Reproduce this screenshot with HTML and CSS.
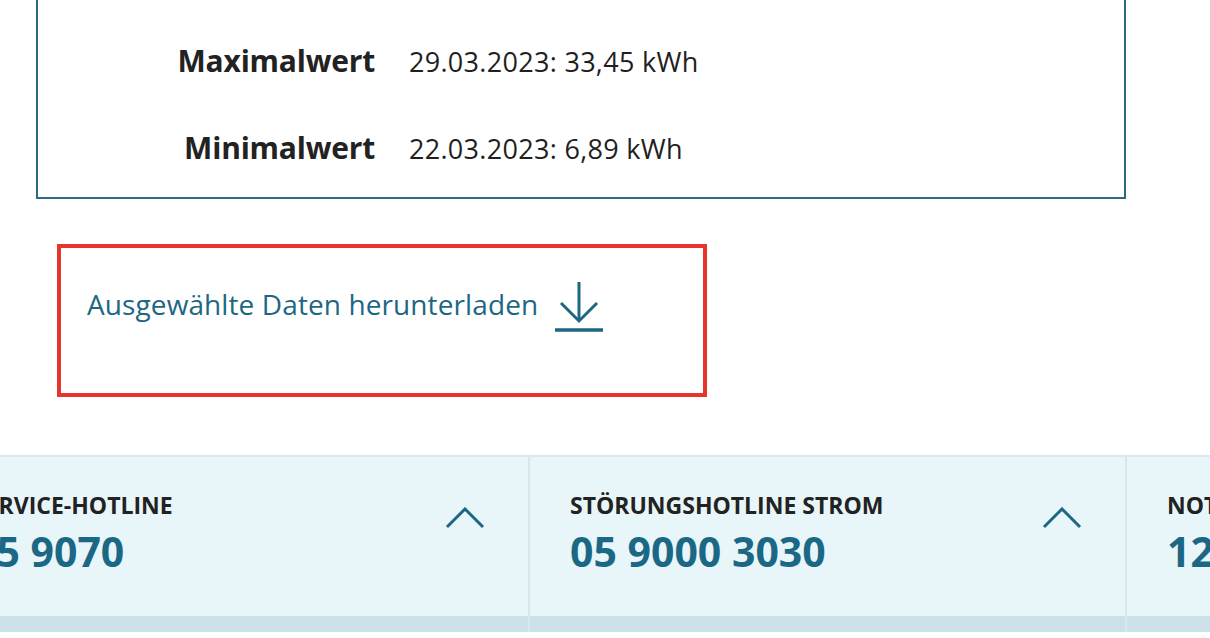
FILE: index.html
```html
<!DOCTYPE html>
<html lang="de">
<head>
<meta charset="utf-8">
<title>Verbrauchsdaten</title>
<link rel="stylesheet" href="styles.css">
</head>
<body>
<section class="card">
  <dl class="stats">
    <dt class="stat-label">Maximalwert</dt>
    <dd class="stat-value">29.03.2023: 33,45 kWh</dd>
    <dt class="stat-label">Minimalwert</dt>
    <dd class="stat-value">22.03.2023: 6,89 kWh</dd>
  </dl>
</section>

<div class="download-box">
  <a class="download-link" href="#">
    <span>Ausgewählte Daten herunterladen</span>
    <svg class="download-icon" width="48" height="54" viewBox="0 0 48 54" aria-hidden="true">
      <path d="M24 2 V41" fill="none" stroke="#1d6784" stroke-width="3"/>
      <path d="M6 23 L24 41 L42 23" fill="none" stroke="#1d6784" stroke-width="3"/>
      <path d="M0 50 H48" fill="none" stroke="#1d6784" stroke-width="3.5"/>
    </svg>
  </a>
</div>

<footer class="hotlines">
  <div class="hotline-row">
    <div class="hotline">
      <div class="hotline-text">
        <div class="hotline-title">SERVICE-HOTLINE</div>
        <div class="hotline-number">05 9070</div>
      </div>
      <svg class="chevron" width="40" height="22" viewBox="0 0 40 22" aria-hidden="true">
        <path d="M2 20 L20 2 L38 20" fill="none" stroke="#1d6784" stroke-width="3"/>
      </svg>
    </div>
    <div class="hotline">
      <div class="hotline-text">
        <div class="hotline-title">STÖRUNGSHOTLINE STROM</div>
        <div class="hotline-number">05 9000 3030</div>
      </div>
      <svg class="chevron" width="40" height="22" viewBox="0 0 40 22" aria-hidden="true">
        <path d="M2 20 L20 2 L38 20" fill="none" stroke="#1d6784" stroke-width="3"/>
      </svg>
    </div>
    <div class="hotline">
      <div class="hotline-text">
        <div class="hotline-title">NOTRUF GAS</div>
        <div class="hotline-number">128</div>
      </div>
      <svg class="chevron" width="40" height="22" viewBox="0 0 40 22" aria-hidden="true">
        <path d="M2 20 L20 2 L38 20" fill="none" stroke="#1d6784" stroke-width="3"/>
      </svg>
    </div>
  </div>
  <div class="hotline-band">
    <div class="band-cell"></div>
    <div class="band-cell"></div>
    <div class="band-cell"></div>
  </div>
</footer>
</body>
</html>
```

FILE: styles.css
```css
* { box-sizing: border-box; }

html, body {
  margin: 0;
  padding: 0;
  background: #ffffff;
  overflow: hidden;
  width: 1210px;
  height: 638px;
}

body {
  font-family: "Open Sans", "Noto Sans", sans-serif;
  color: #222222;
}

.card {
  margin-left: 36px;
  width: 1090px;
  border: 2px solid #2b6a80;
  border-top: none;
  padding: 42px 0 29px;
}

.stats {
  margin: 0;
  display: grid;
  grid-template-columns: 337px 1fr;
  column-gap: 34px;
  row-gap: 48px;
  align-items: baseline;
}

.stat-label {
  margin: 0;
  text-align: right;
  font-weight: 700;
  font-size: 30px;
  line-height: 38px;
  letter-spacing: -0.2px;
  color: #222222;
}

.stat-value {
  margin: 0;
  font-size: 27px;
  line-height: 38px;
  letter-spacing: 0.3px;
  color: #1f1f1f;
}

.download-box {
  margin: 45px 0 0 57px;
  width: 650px;
  height: 153px;
  border: 4px solid #e8342a;
  padding: 36px 0 0 26px;
}

.download-link {
  display: flex;
  align-items: flex-start;
  gap: 17px;
  color: #1d6784;
  text-decoration: none;
  font-size: 28px;
  line-height: 40px;
  letter-spacing: 0.1px;
}

.download-icon {
  display: block;
  flex: none;
  margin-top: -4px;
}

.hotlines {
  margin-top: 58px;
  border-top: 2px solid #dbe9ee;
  background: #e9f6f9;
}

.hotline-row,
.hotline-band {
  display: flex;
  margin-left: -67px;
}

.hotline {
  flex: none;
  width: 597px;
  height: 159px;
  border-right: 2px solid #d6e7ed;
  padding: 33px 43px 0 40px;
  display: flex;
  justify-content: space-between;
  align-items: flex-start;
}

.hotline-title {
  font-weight: 700;
  font-size: 23px;
  line-height: 30px;
  color: #222222;
  white-space: nowrap;
}

.hotline-number {
  margin-top: 6px;
  font-weight: 700;
  font-size: 41px;
  line-height: 50px;
  color: #1b6886;
  white-space: nowrap;
}

.chevron {
  display: block;
  margin-top: 17px;
  flex: none;
}

.band-cell {
  flex: none;
  width: 597px;
  height: 16px;
  background: #cde2e8;
  border-right: 2px solid #d9e9ee;
}
```
